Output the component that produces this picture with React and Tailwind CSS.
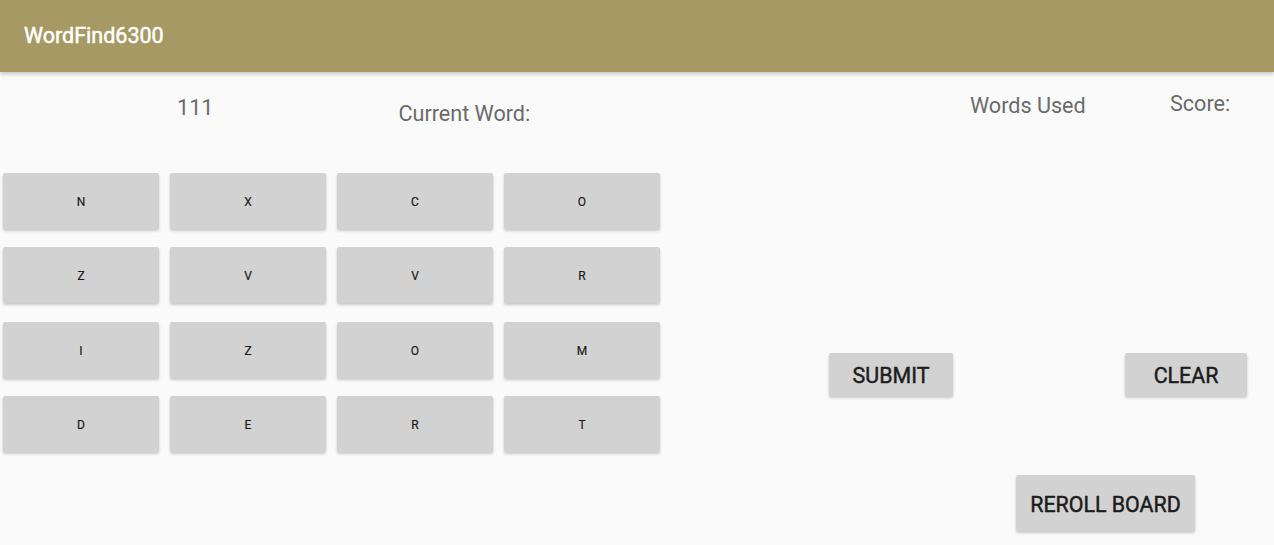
import React from 'react';

const letters = ['N', 'X', 'C', 'O', 'Z', 'V', 'V', 'R', 'I', 'Z', 'O', 'M', 'D', 'E', 'R', 'T'];

const btn =
  'flex items-center justify-center rounded-[2px] bg-[#d1d2d1] text-[#1c1c1c] shadow-[0_2px_3px_rgba(0,0,0,0.2)]';

const App = () => {
  return (
    <div className="w-[1274px] h-[545px] overflow-hidden bg-[#fafafa] font-['Roboto',sans-serif]">
      <div className="relative z-10 h-[72px] bg-[#a69963] flex items-center pl-[24px] shadow-[0_2px_4px_rgba(0,0,0,0.22)]">
        <p className="text-white text-[21.5px] leading-none [-webkit-text-stroke:0.5px_#ffffff]">WordFind6300</p>
      </div>
      <div className="flex">
        <div className="w-[660px] pl-[3px]">
          <div className="flex items-start h-[101px] text-[#6a6a6a] text-[21.6px] leading-[24px]">
            <p className="ml-[174px] mt-[24px]">111</p>
            <p className="ml-[185px] mt-[30px]">Current Word:</p>
          </div>
          <div className="grid grid-cols-4 gap-x-[11px] gap-y-[18.4px] w-[657px]">
            {letters.map((l, i) => (
              <div key={i} className={btn + ' h-[56px] pt-[2px] text-[12px] [-webkit-text-stroke:0.2px_#1c1c1c]'}>
                {l}
              </div>
            ))}
          </div>
        </div>
        <div className="flex-1 flex flex-col">
          <div className="flex items-start mt-[22px] text-[#6a6a6a] text-[21.6px] leading-[24px]">
            <p className="ml-[310px] w-[200px]">Words Used</p>
            <p className="-mt-[2px]">Score:</p>
          </div>
          <div className="flex mt-[235px] text-[21.4px] [-webkit-text-stroke:0.45px_#1c1c1c]">
            <div className={btn + ' ml-[169px] w-[124px] h-[43px] pt-[4px]'}>SUBMIT</div>
            <div className={btn + ' ml-[172px] w-[122px] h-[43px] pt-[4px]'}>CLEAR</div>
          </div>
          <div className="flex mt-[79px] text-[21.4px] [-webkit-text-stroke:0.45px_#1c1c1c]">
            <div className={btn + ' ml-[356px] w-[179px] h-[56px] pt-[4px]'}>REROLL BOARD</div>
          </div>
        </div>
      </div>
    </div>
  );
};

export default App;
